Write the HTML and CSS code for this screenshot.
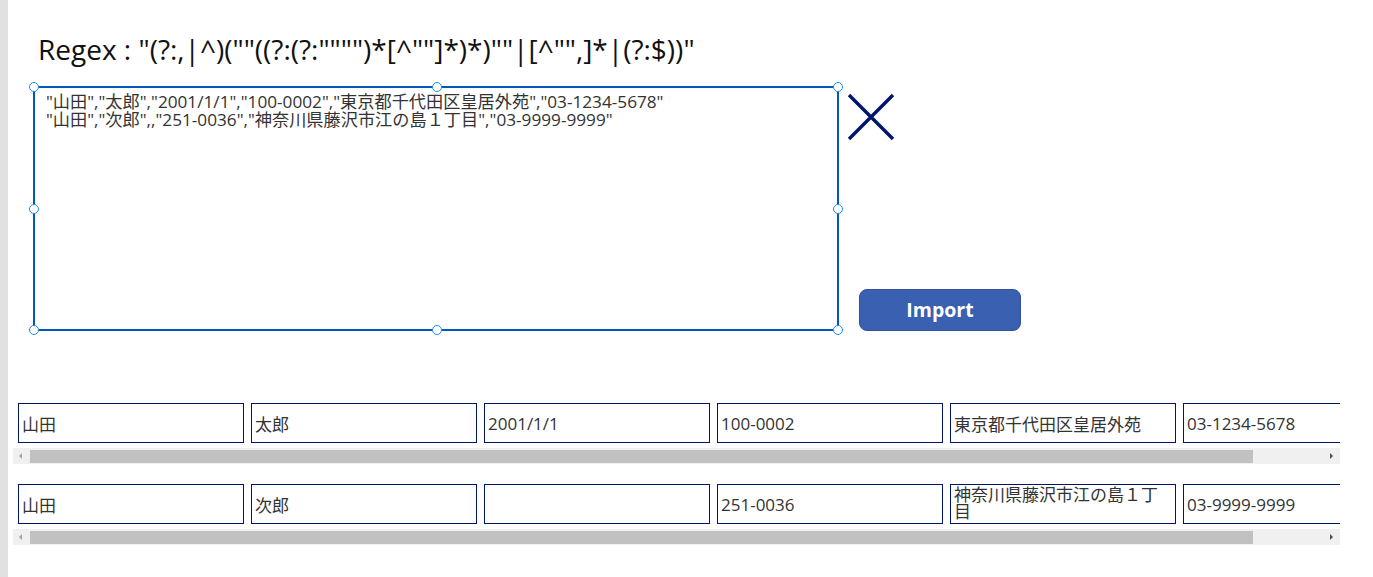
FILE: index.html
```html
<!DOCTYPE html>
<html lang="ja">
<head>
<meta charset="utf-8">
<title>CSV Import</title>
<link rel="stylesheet" href="styles.css">
</head>
<body>
<div class="rail"></div>
<main class="screen">
  <h1 class="regex">Regex : "(?:,|^)(""((?:(?:"""")*[^""]*)*)""|[^"",]*|(?:$))"</h1>

  <section class="editor-row">
    <div class="editor">
      <div class="editor-text">"山田","太郎","2001/1/1","100-0002","東京都千代田区皇居外苑","03-1234-5678"
"山田","次郎",,"251-0036","神奈川県藤沢市江の島１丁目","03-9999-9999"</div>
      <span class="handle h-tl"></span>
      <span class="handle h-tc"></span>
      <span class="handle h-tr"></span>
      <span class="handle h-ml"></span>
      <span class="handle h-mr"></span>
      <span class="handle h-bl"></span>
      <span class="handle h-bc"></span>
      <span class="handle h-br"></span>
    </div>
    <div class="side">
      <svg class="clear-icon" width="48" height="48" viewBox="0 0 48 48" aria-label="clear">
        <path d="M2 2 L46 46 M46 2 L2 46" stroke="#00156b" stroke-width="3.4" fill="none"/>
      </svg>
      <button class="import-btn">Import</button>
    </div>
  </section>

  <section class="gallery">
    <div class="record">
      <div class="cells">
        <div class="cell">山田</div>
        <div class="cell">太郎</div>
        <div class="cell">2001/1/1</div>
        <div class="cell">100-0002</div>
        <div class="cell">東京都千代田区皇居外苑</div>
        <div class="cell">03-1234-5678</div>
      </div>
      <div class="hscroll">
        <span class="arrow arrow-left"></span>
        <span class="thumb"></span>
        <span class="arrow arrow-right"></span>
      </div>
    </div>
    <div class="record">
      <div class="cells">
        <div class="cell">山田</div>
        <div class="cell">次郎</div>
        <div class="cell"></div>
        <div class="cell">251-0036</div>
        <div class="cell cell-wrap">神奈川県藤沢市江の島１丁目</div>
        <div class="cell">03-9999-9999</div>
      </div>
      <div class="hscroll">
        <span class="arrow arrow-left"></span>
        <span class="thumb"></span>
        <span class="arrow arrow-right"></span>
      </div>
    </div>
  </section>
</main>
</body>
</html>
```

FILE: styles.css
```css
* {
  box-sizing: border-box;
}

html, body {
  margin: 0;
  padding: 0;
  background: #ffffff;
}

body {
  display: flex;
  height: 577px;
  overflow: hidden;
  font-family: "Open Sans", "Noto Sans CJK JP", sans-serif;
  color: #333333;
}

.rail {
  flex: 0 0 8px;
  background: #e1e1e1;
}

.screen {
  flex: 1;
  display: flex;
  flex-direction: column;
}

.regex {
  margin: 31px 0 0 30px;
  font-family: "Open Sans", "Noto Sans CJK JP", sans-serif;
  font-weight: 400;
  font-size: 28px;
  line-height: 36px;
  color: #111111;
  white-space: nowrap;
}

.editor-row {
  display: flex;
  margin: 19px 0 0 25px;
}

.editor {
  position: relative;
  width: 806px;
  height: 245px;
  border: 2px solid #0058b8;
}

.editor-text {
  padding: 5px 0 0 11px;
  font-family: "Open Sans", "Noto Sans CJK JP", sans-serif;
  font-size: 17.2px;
  line-height: 18px;
  color: #333333;
  white-space: pre;
}

.handle {
  position: absolute;
  width: 10px;
  height: 10px;
  border: 1px solid #1f8ef1;
  border-radius: 50%;
  background: #ffffff;
}

.h-tl { left: -6px;  top: -6px; }
.h-tc { left: 397px; top: -6px; }
.h-tr { right: -6px; top: -6px; }
.h-ml { left: -6px;  top: 116px; }
.h-mr { right: -6px; top: 116px; }
.h-bl { left: -6px;  bottom: -6px; }
.h-bc { left: 397px; bottom: -6px; }
.h-br { right: -6px; bottom: -6px; }

.side {
  display: flex;
  flex-direction: column;
  align-items: flex-start;
  padding-left: 8px;
}

.clear-icon {
  display: block;
  margin-top: 7px;
}

.import-btn {
  margin: 148px 0 0 12px;
  width: 162px;
  height: 42px;
  border: 1px solid #32529c;
  border-radius: 8px;
  background: #3a60b1;
  color: #ffffff;
  font-family: "Open Sans", sans-serif;
  font-weight: 700;
  font-size: 19.5px;
  padding: 0 0 2px 0;
}

.gallery {
  display: flex;
  flex-direction: column;
  gap: 20px;
  margin: 72px 0 0 5px;
  width: 1327px;
}

.record {
  display: flex;
  flex-direction: column;
  gap: 5px;
}

.cells {
  display: flex;
  gap: 7px;
  padding-left: 5px;
  overflow: hidden;
}

.cell {
  flex: 0 0 226px;
  height: 40px;
  border: 1px solid #00156b;
  padding: 0 3px;
  display: flex;
  align-items: center;
  font-family: "Open Sans", "Noto Sans CJK JP", sans-serif;
  font-size: 17px;
  color: #333333;
  white-space: nowrap;
}

.cell-wrap {
  align-items: flex-start;
  white-space: normal;
  line-height: 17px;
  padding-top: 1px;
}

.hscroll {
  position: relative;
  display: flex;
  align-items: center;
  height: 16px;
  background: #f0f0f0;
}

.thumb {
  margin-left: 17px;
  width: 1223px;
  height: 13px;
  background: #c1c1c1;
}

.arrow {
  position: absolute;
  top: 5px;
  width: 0;
  height: 0;
  border-top: 3px solid transparent;
  border-bottom: 3px solid transparent;
}

.arrow-left {
  left: 6px;
  border-right: 3px solid #a3a3a3;
}

.arrow-right {
  right: 7px;
  border-left: 3px solid #505050;
}
```
